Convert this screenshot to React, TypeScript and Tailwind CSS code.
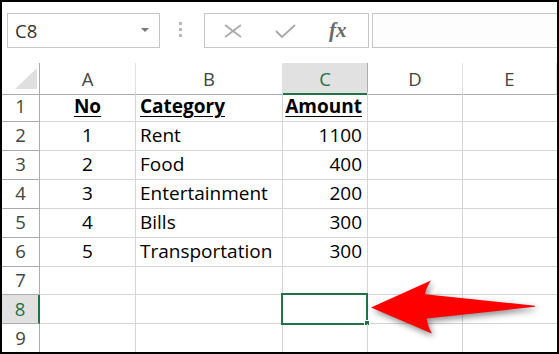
import React from "react";

const font = { fontFamily: "'Open Sans', 'Noto Sans', sans-serif" };

type Row = { n: string; a: string; b: string; c: string; head?: boolean };

const data: Row[] = [
  { n: "1", a: "No", b: "Category", c: "Amount", head: true },
  { n: "2", a: "1", b: "Rent", c: "1100" },
  { n: "3", a: "2", b: "Food", c: "400" },
  { n: "4", a: "3", b: "Entertainment", c: "200" },
  { n: "5", a: "4", b: "Bills", c: "300" },
  { n: "6", a: "5", b: "Transportation", c: "300" },
  { n: "7", a: "", b: "", c: "" },
  { n: "8", a: "", b: "", c: "" },
  { n: "9", a: "", b: "", c: "" },
];

const cols = "grid grid-cols-[38px_96px_147px_85px_95px_1fr]";

export default function App() {
  return (
    <div
      className="relative w-[559px] h-[354px] overflow-hidden border-2 border-black bg-white text-black"
      style={font}
    >
      {/* toolbar */}
      <div className="flex h-[61px] items-start pt-[11px] pl-[5px]">
        <div className="flex h-[35px] w-[153px] items-center justify-between border border-[#c6c6c6] bg-white pl-[7px] pr-[10px]">
          <span className="text-[18.5px] text-[#333]">C8</span>
          <svg width="8" height="5" viewBox="0 0 8 5">
            <path d="M0 0 L8 0 L4 4 Z" fill="#777" />
          </svg>
        </div>
        <div className="ml-[19px] mt-[9px] flex flex-col gap-[3px]">
          <div className="h-[3px] w-[3px] bg-[#b8b8b8]" />
          <div className="h-[3px] w-[3px] bg-[#b8b8b8]" />
          <div className="h-[3px] w-[3px] bg-[#b8b8b8]" />
        </div>
        <div className="ml-[22px] flex h-[35px] w-[165px] items-center border border-[#c6c6c6] bg-white">
          <svg width="20" height="16" viewBox="0 0 20 16" className="ml-[18px]">
            <path d="M2 2 L18 14 M18 2 L2 14" stroke="#a8a8a8" strokeWidth="1.6" fill="none" />
          </svg>
          <svg width="22" height="16" viewBox="0 0 22 16" className="ml-[32px]">
            <path d="M1 8 L7 14 L20 2" stroke="#a8a8a8" strokeWidth="1.8" fill="none" />
          </svg>
          <span
            className="ml-[32px] text-[21px] font-bold italic text-[#6a6a6a] leading-none"
            style={{ fontFamily: "'Liberation Serif', serif" }}
          >
            fx
          </span>
        </div>
        <div className="ml-[3px] h-[35px] flex-1 border-y border-l border-[#c6c6c6] bg-[#fdfdfd]" />
      </div>

      {/* column header */}
      <div className={`${cols} h-[29px] text-[18.5px] text-[#444]`}>
        <div className="relative border-r border-b border-[#ababab]">
          <svg width="22" height="21" viewBox="0 0 22 21" className="absolute left-[13px] top-[5px]">
            <path d="M22 0 L22 21 L0 21 Z" fill="#dfdfdf" />
          </svg>
        </div>
        {["A", "B", "C", "D", "E"].map((l) => (
          <div
            key={l}
            className={
              l === "C"
                ? "flex items-center justify-center border-r border-b-2 border-r-[#ababab] border-b-[#217346] bg-[#e1e1e1] pt-[2px] text-[#217346]"
                : "flex items-center justify-center border-r border-b border-r-[#e1e1e1] border-b-[#ababab]"
            }
          >
            {l}
          </div>
        ))}
      </div>

      {/* rows */}
      {data.map((r) => (
        <div key={r.n} className={`${cols} h-[29px] text-[19px]`}>
          <div
            className={
              r.n === "8"
                ? "flex items-center justify-center border-b border-r-2 border-b-[#ababab] border-r-[#217346] bg-[#e1e1e1] text-[18.5px] text-[#217346]"
                : "flex items-center justify-center border-b border-r border-[#ababab] text-[18.5px] text-[#444]"
            }
          >
            {r.n}
          </div>
          <div className="flex items-center justify-center border-r border-b border-[#d4d4d4]">
            <span className={r.head ? "font-bold underline underline-offset-[3px]" : ""}>{r.a}</span>
          </div>
          <div className="flex items-center border-r border-b border-[#d4d4d4] pl-[4px]">
            <span className={r.head ? "font-bold underline underline-offset-[3px]" : ""}>{r.b}</span>
          </div>
          <div className="relative flex items-center justify-end border-r border-b border-[#d4d4d4] pr-[5px]">
            <span className={r.head ? "font-bold underline underline-offset-[3px]" : ""}>{r.c}</span>
            {r.n === "8" && (
              <>
                <div className="absolute -left-[2px] -top-[2px] h-[32px] w-[87px] border-2 border-[#217346]" />
                <div className="absolute -right-[3px] -bottom-[3px] h-[6px] w-[6px] border border-white bg-[#217346]" />
              </>
            )}
          </div>
          <div className="border-r border-b border-[#d4d4d4]" />
          <div className="border-b border-[#d4d4d4]" />
        </div>
      ))}

      {/* red arrow overlay */}
      <svg
        className="absolute left-0 top-0"
        width="559"
        height="354"
        viewBox="0 0 559 354"
        style={{ filter: "drop-shadow(2px 3px 3px rgba(0,0,0,0.45))" }}
      >
        <path
          d="M369 305.5 L429 278.5 Q424 286 423 292.2 L533 303.7 L533 304.8 L424.7 316.5 Q425.5 324 429.7 331.5 Z"
          fill="#ff0000"
        />
      </svg>
    </div>
  );
}
